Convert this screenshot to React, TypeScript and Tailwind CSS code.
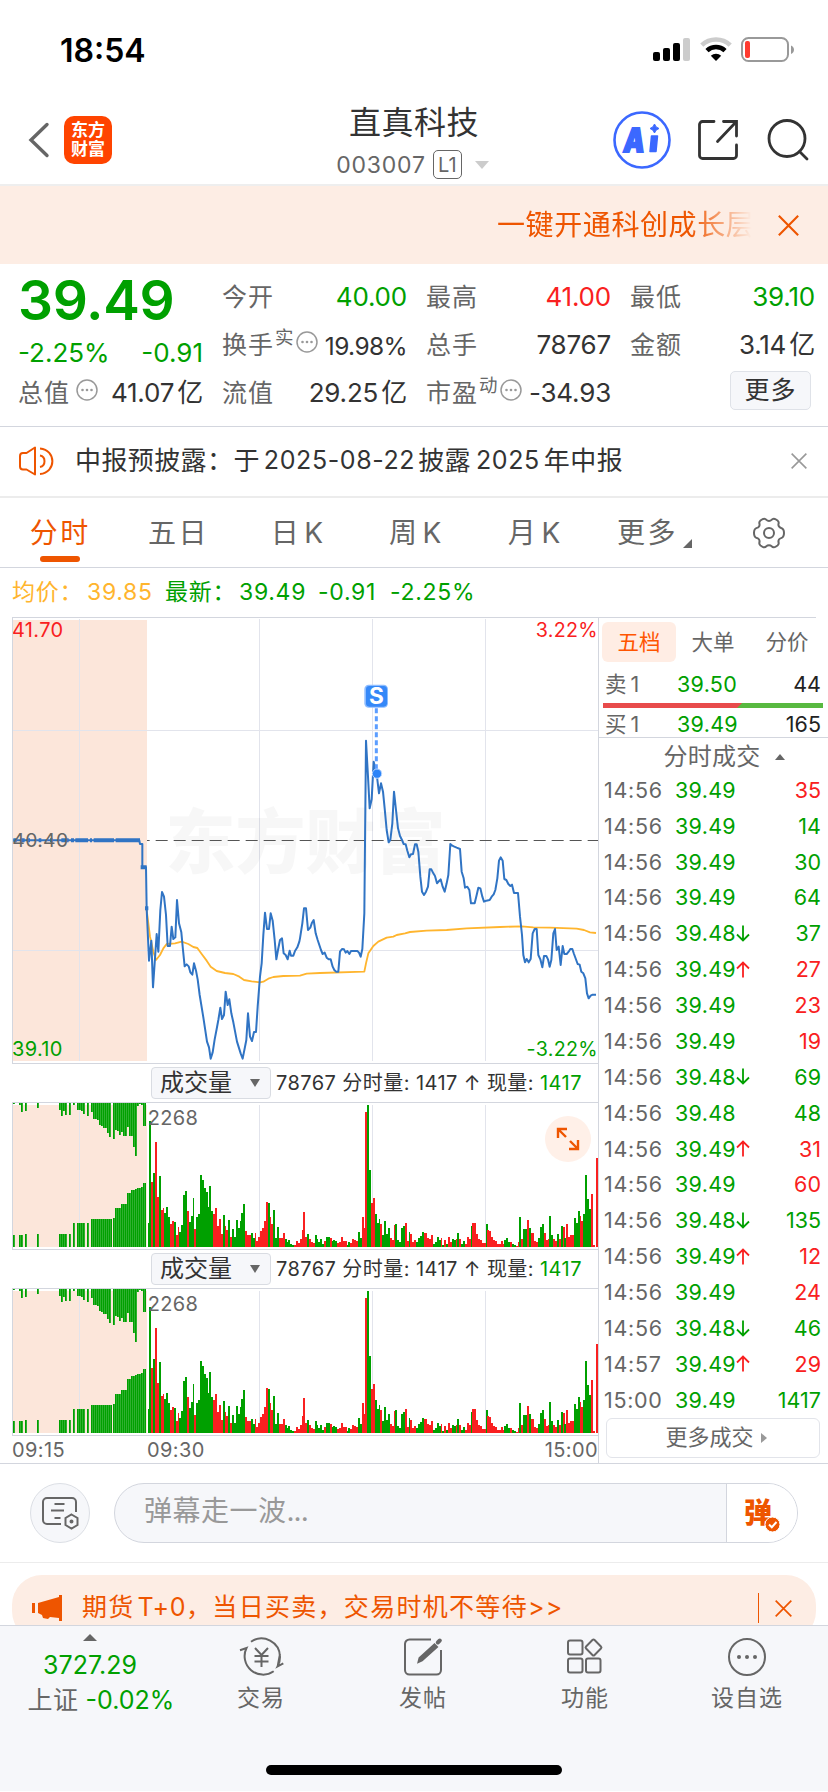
import type { ReactNode } from 'react'

// signed bar heights per minute: positive = red, negative = green
const VOLUME = [
  -72, -378, 196, -223, 316, 151, -213, 111, 117, -102, -121, -89, 68, 77, -75, 36, 61, -45, -66, -156,
  -169, 108, -75, -94, -147, 55, -91, -99, -215, -201, -176, -164, -119, -182, -107, 100, 118, 63, 85, 38,
  -96, 63, 51, -80, 30, -55, -30, -80, -56, -77, -101, -129, 49, 35, 37, -41, -26, 43, 17, 30,
  47, 56, 78, 136, -132, 91, 69, -112, -26, -61, 26, 28, 43, -23, -16, -22, -9, -6, 7, 18,
  11, 23, 51, 104, 31, -39, 23, 16, 13, -36, -24, -14, -25, -9, 17, -30, -29, 26, -17, -22,
  -19, 12, 14, 31, 18, 17, -7, -16, 13, 25, 22, 18, -45, -28, 91, 56, 405, -426, -230, 133,
  146, -99, -73, -84, 69, -36, -78, -39, -58, 26, 21, 67, -70, -21, -16, -57, -64, 73, 19, -45,
  39, 14, 21, -14, -27, -34, -45, 43, 43, 26, 24, 35, -8, -16, -31, -22, 26, -7, 20, -8,
  29, 14, -23, -20, 24, -42, 24, -9, -19, 8, 29, 23, -63, 72, 73, 39, 23, 22, 11, 12,
  -69, 51, 48, 30, 21, 19, 8, 8, 17, 9, -21, -26, -16, 15, -8, -7, 4, 15, -89, 23,
  -53, -55, 80, -56, 42, 42, 18, 16, -28, -61, -68, 42, 21, 24, -92, -36, 24, 17, -38, 23,
  -64, 59, -26, 68, 31, 35, 35, -86, -73, -107, 94, 79, -99, -215, -143, -113, 159, 5, 0, 266,
]

// call auction bars: [from, to, height]
const AUCTION_BOTTOM = [
  [39, 45, 36], [57, 69, 36], [75, 81, 39], [111, 117, 40], [177, 201, 40], [207, 213, 40], [219, 225, 72],
  [231, 256, 73], [262, 268, 73], [274, 329, 83], [329, 335, 85], [340, 346, 86], [346, 364, 116],
  [364, 382, 128], [382, 393, 162], [393, 405, 172], [405, 412, 175], [412, 424, 177], [424, 430, 181], [430, 437, 193],
]
const AUCTION_TOP = [
  [39, 45, 3], [57, 63, 6], [63, 69, 26], [75, 81, 25], [111, 117, 15], [177, 183, 21], [183, 189, 38], [189, 195, 25],
  [195, 201, 36], [207, 213, 36], [219, 225, 6], [231, 243, 22], [243, 249, 25], [249, 256, 32], [262, 268, 38],
  [274, 280, 28], [280, 292, 48], [292, 298, 51], [298, 304, 65], [304, 310, 69], [310, 322, 76], [322, 328, 91],
  [328, 334, 103], [340, 346, 109], [346, 352, 81], [352, 358, 84], [358, 364, 97], [364, 370, 88], [370, 382, 99],
  [382, 388, 73], [388, 400, 99], [400, 406, 133], [406, 412, 158], [412, 418, 8], [418, 424, 2], [424, 430, 7], [430, 437, 68],
]

const PRICE =
  '40,751 418,751 420,762 427,762 427,832 438,832 440,955 447,1112 454,1052 459,1192 470,1032 475,1085 481,960 486,906 492,920 498,975 503,1068 510,1068 515,1010 520,1047 526,1042 531,930 537,1000 544,1027 549,1080 554,1129 560,1123 566,1129 571,1147 577,1154 582,1120 588,1142 593,1168 599,1215 610,1282 621,1355 627,1372 632,1406 638,1387 644,1348 650,1317 655,1290 661,1253 666,1287 672,1275 677,1205 683,1245 688,1228 694,1270 700,1297 711,1355 722,1390 728,1406 739,1350 744,1270 750,1340 756,1353 762,1326 768,1326 773,1250 780,1160 785,1120 790,1035 795,968 801,1017 807,1017 812,970 818,992 824,1050 829,1108 834,1080 840,1050 846,1045 851,1090 857,1095 863,1108 869,1082 873,1097 880,1097 885,1083 892,1072 898,1055 ' +
  '900,1045 907,1000 912,955 918,955 924,1020 931,1013 936,998 941,990 947,1030 953,1050 963,1080 968,1092 974,1088 980,1103 986,1108 992,1108 998,1130 1003,1140 1008,1145 1015,1145 1020,1085 1026,1077 1032,1078 1037,1088 1042,1083 1048,1092 1053,1083 1072,1083 1077,1088 1082,1100 1087,1077 1093,970 1098,452 1104,560 1109,655 1115,628 1121,515 1130,552 1137,610 1143,580 1149,605 1154,655 1160,720 1166,757 1171,750 1177,700 1182,605 1188,660 1194,715 1200,738 1206,750 1211,762 1217,763 1222,782 1228,802 1233,793 1239,792 1245,763 1250,763 1255,785 1261,860 1266,905 1272,915 1278,905 1284,890 1289,838 1294,838 1300,850 1305,858 1311,880 1317,873 1322,868 1328,890 1334,905 1340,880 1345,855 ' +
  '1351,762 1357,767 1363,770 1370,773 1380,777 1385,845 1391,865 1395,893 1402,890 1408,900 1413,940 1424,940 1430,915 1435,893 1441,895 1447,920 1452,935 1459,932 1469,930 1475,920 1481,913 1486,900 1492,865 1497,812 1502,802 1508,812 1513,867 1519,870 1525,882 1531,888 1536,884 1542,909 1554,909 1560,980 1566,1035 1570,1095 1575,1117 1580,1107 1586,1117 1592,1107 1598,1030 1604,1017 1610,1017 1615,1095 1621,1108 1627,1132 1632,1098 1639,1098 1644,1108 1649,1130 1654,1110 1660,1030 1665,1017 1670,1080 1676,1070 1682,1125 1688,1068 1693,1092 1700,1092 1706,1085 1711,1077 1717,1077 1722,1092 1733,1122 1739,1124 1744,1145 1750,1150 1756,1165 1761,1210 1766,1225 1772,1217 1778,1214 1788,1214'

const AVERAGE =
  '440,960 450,1040 460,1085 468,1110 480,1095 490,1075 500,1062 525,1060 545,1055 565,1062 580,1071 592,1074 605,1092 620,1112 632,1130 650,1143 675,1149 700,1152 718,1160 732,1170 755,1174 780,1177 790,1175 805,1166 820,1161 850,1158 900,1157 920,1151 960,1149 1093,1145 1098,1120 1105,1090 1120,1068 1135,1055 1160,1043 1180,1040 1190,1035 1215,1030 1230,1026 1280,1022 1340,1020 1400,1015 1500,1011 1565,1009 1600,1012 1650,1013 1730,1016 1752,1020 1770,1027 1788,1029'

const TRADES: [string, string, string, string, boolean][] = [
  ['14:56', '39.49', '', '35', true],
  ['14:56', '39.49', '', '14', false],
  ['14:56', '39.49', '', '30', false],
  ['14:56', '39.49', '', '64', false],
  ['14:56', '39.48', 'down', '37', false],
  ['14:56', '39.49', 'up', '27', true],
  ['14:56', '39.49', '', '23', true],
  ['14:56', '39.49', '', '19', true],
  ['14:56', '39.48', 'down', '69', false],
  ['14:56', '39.48', '', '48', false],
  ['14:56', '39.49', 'up', '31', true],
  ['14:56', '39.49', '', '60', true],
  ['14:56', '39.48', 'down', '135', false],
  ['14:56', '39.49', 'up', '12', true],
  ['14:56', '39.49', '', '24', true],
  ['14:56', '39.48', 'down', '46', false],
  ['14:57', '39.49', 'up', '29', true],
  ['15:00', '39.49', '', '1417', false],
]

const GRID_X = [238.5, 778.5, 1117.5, 1456.5]

function StatusBar() {
  return (
    <div className="flex h-[92px] items-start justify-between pl-[60px] pr-[33px]">
      <span className="mt-[31px] text-[32px] leading-[40px] font-semibold text-black">18:54</span>
      <div className="mt-[37px] flex items-start">
        <svg width="37" height="24" viewBox="0 0 37 24">
          <rect x="0" y="15" width="7" height="9" rx="2" />
          <rect x="10" y="11" width="7" height="13" rx="2" />
          <rect x="20" y="6" width="7" height="18" rx="2" />
          <rect x="30" y="1" width="7" height="23" rx="2" fill="#cccccc" />
        </svg>
        <svg className="ml-[10px]" width="32" height="24" viewBox="0 0 32 24" fill="none">
          <path d="M1.800 8.200a20.500 20.500 0 0 1 28.400 0" stroke="#cccccc" strokeWidth="4.600" />
          <path d="M7 13.600a13.200 13.200 0 0 1 18 0" stroke="#000" strokeWidth="4.600" />
          <path d="M16 24l-5.200-5.300a7.600 7.600 0 0 1 10.400 0z" fill="#000" />
        </svg>
        <svg className="ml-[9px]" width="54" height="26" viewBox="0 0 54 26">
          <rect x="1" y="1" width="46" height="23" rx="6.5" fill="none" stroke="#999" strokeWidth="2" />
          <rect x="4" y="4" width="5" height="17" rx="2" fill="#ff3b30" />
          <path d="M50 8.500c4 1.500 4 7 0 8.500z" fill="#999" />
        </svg>
      </div>
    </div>
  )
}

function Header() {
  return (
    <div className="grid h-[94px] grid-cols-[1fr_auto_1fr] border-b-2 border-[#eeeeee]">
      <div className="flex items-start pl-[28px] pt-6">
        <svg className="mt-[6px]" width="22" height="36" viewBox="0 0 22 36" fill="none">
          <path d="M19 2.500L3 18l16 15.500" stroke="#666" strokeWidth="3.400" strokeLinecap="round" />
        </svg>
        <div className="ml-[14px] flex h-12 w-12 flex-col items-center justify-center rounded-[10px] bg-[#ff4400] text-[17px] leading-[19px] font-bold text-white">
          <span>东方</span>
          <span>财富</span>
        </div>
      </div>
      <div className="flex flex-col items-center">
        <h1 className="mt-[11px] text-[32px] leading-[40px] tracking-[0.500px] text-[#333]">直真科技</h1>
        <div className="mt-[7px] flex h-[29px] items-center pr-[3px]">
          <span className="pt-px text-[23px] tracking-[0.800px] text-[#666]">003007</span>
          <span className="ml-[7px] flex h-[29px] w-[29px] items-center justify-center rounded-[5px] border border-[#666] text-[20px] text-[#666]">
            L1
          </span>
          <span className="ml-[13px] h-0 w-0 border-x-[7px] border-t-[8px] border-x-transparent border-t-[#cccccc]" />
        </div>
      </div>
      <div className="flex items-start justify-end pr-[18px] pt-[19px]">
        <svg width="58" height="58" viewBox="0 0 58 58">
          <circle cx="29" cy="29" r="27.500" fill="none" stroke="#3b68ff" strokeWidth="2.600" />
          <text x="10" y="41" fontSize="33" fontWeight="900" fill="#3b68ff" stroke="#3b68ff" strokeWidth="1.800" transform="skewX(-7) translate(4.500 0)" textLength="21" lengthAdjust="spacingAndGlyphs">
            A
          </text>
          <path d="M38.500 25h6l-1.500 15.500h-6z" fill="#3b68ff" stroke="#3b68ff" strokeWidth="1.500" strokeLinejoin="round" />
          <path d="M41.500 13q1 3.500 4.500 4.500q-3.500 1-4.500 4.500q-1-3.500-4.500-4.500q3.500-1 4.500-4.500z" fill="#3b68ff" stroke="#3b68ff" />
        </svg>
        <svg className="ml-[26px] mt-[7px]" width="42" height="44" viewBox="0 0 42 44" fill="none" stroke="#333" strokeWidth="2.800">
          <path d="M17 3.500H5.500a3 3 0 0 0-3 3V37.500a3 3 0 0 0 3 3h31a3 3 0 0 0 3-3V27" strokeLinecap="round" />
          <path d="M26.500 3.500h13V18" strokeLinecap="round" />
          <path d="M38.500 4.500L20.500 23.500" strokeLinecap="round" />
        </svg>
        <svg className="ml-[27px] mt-[8px]" width="44" height="44" viewBox="0 0 44 44" fill="none" stroke="#333" strokeWidth="2.800">
          <circle cx="21" cy="19.500" r="18" />
          <path d="M33.500 32.500l7.500 7.500" strokeLinecap="round" />
        </svg>
      </div>
    </div>
  )
}

function Cross({ size, className }: { size: number; className: string }) {
  return (
    <svg className={className} width={size} height={size} viewBox="0 0 20 20" fill="none" stroke="currentColor" strokeWidth="2">
      <path d="M0.800 0.800L19.200 19.200M19.200 0.800L0.800 19.200" />
    </svg>
  )
}

function Banner() {
  return (
    <div className="flex h-[78px] items-center justify-end bg-[#fdede4] pr-[29px] text-[#ee5500]">
      <div className="w-[260px] text-[28px] leading-[40px] tracking-[0.600px] whitespace-nowrap [mask-image:linear-gradient(to_right,black_74%,transparent_98%)]">
        一键开通科创成长层
      </div>
      <Cross size={21} className="ml-[21px]" />
    </div>
  )
}

function Dots() {
  return (
    <svg width="22" height="22" viewBox="0 0 22 22" className="mb-[9px] shrink-0">
      <circle cx="11" cy="11" r="10" fill="none" stroke="#999" strokeWidth="1.500" />
      <circle cx="6.500" cy="11" r="1.300" fill="#999" />
      <circle cx="11" cy="11" r="1.300" fill="#999" />
      <circle cx="15.500" cy="11" r="1.300" fill="#999" />
    </svg>
  )
}

function Stat({ label, sup, dots, value, color = 'text-[#333]' }: { label: string; sup?: string; dots?: boolean; value: string; color?: string }) {
  const unit = value.endsWith('亿')
  return (
    <div className="flex h-12 items-center justify-between whitespace-nowrap">
      <div className="flex items-center text-[25px] tracking-[1px] text-[#666]">
        {label}
        {sup && <span className="mb-[16px] ml-px text-[18.500px] tracking-normal">{sup}</span>}
        {dots && <span className={sup ? 'ml-[2px]' : 'ml-[6px]'}><Dots /></span>}
      </div>
      <div className={`${sup === '实' ? 'pt-px text-[24.500px] tracking-[-0.600px]' : 'pb-[3px] text-[26px] tracking-[-0.200px]'} ${color}`}>
        {unit ? value.slice(0, -1) : value}
        {unit && <span className="ml-[3px]">亿</span>}
      </div>
    </div>
  )
}

function Quote() {
  return (
    <div className="flex h-[163px] border-b border-[#d3d6de] pt-[10px] pl-[18px]">
      <div className="w-[185px] shrink-0">
        <div className="-mt-[4px] h-[59px] text-[55px] leading-[60px] font-semibold tracking-[-0.300px] text-[#00a000]">39.49</div>
        <div className="flex h-[46px] items-center justify-between text-[26px] text-[#00a000]">
          <span>-2.25%</span>
          <span>-0.91</span>
        </div>
        <div className="-mt-[5px]">
          <Stat label="总值" dots value="41.07亿" />
        </div>
      </div>
      <div className="ml-[19px] w-[185px] shrink-0">
        <Stat label="今开" value="40.00" color="text-[#00a000]" />
        <Stat label="换手" sup="实" dots value="19.98%" />
        <Stat label="流值" value="29.25亿" />
      </div>
      <div className="ml-[19px] w-[185px] shrink-0">
        <Stat label="最高" value="41.00" color="text-[#f92020]" />
        <Stat label="总手" value="78767" />
        <Stat label="市盈" sup="动" dots value="-34.93" />
      </div>
      <div className="ml-[19px] w-[185px] shrink-0">
        <Stat label="最低" value="39.10" color="text-[#00a000]" />
        <Stat label="金额" value="3.14亿" />
        <div className="flex justify-end pt-px pr-[4px]">
          <button className="flex h-[39px] w-[81px] items-center justify-center rounded-[5px] border border-[#dfe2e8] bg-[#f6f7fa] text-[25px] tracking-[1px] text-[#333]">
            更多
          </button>
        </div>
      </div>
    </div>
  )
}

function Notice() {
  return (
    <div className="flex h-[71px] items-center border-b-2 border-[#ececec] pr-[21px] pb-[2px] pl-[19px]">
      <svg width="36" height="30" viewBox="0 0 36 30" fill="none" stroke="#ee5500" strokeWidth="2">
        <path d="M16 1.500v27l-8.500-5H4a3 3 0 0 1-3-3V10a3 3 0 0 1 3-3h3.500z" strokeLinejoin="round" />
        <path d="M21 9.500c6 1 6 10.500 0 11.500M21 2.500c16.500 1.500 16.500 24 0 25.500" />
      </svg>
      <div className="ml-[20px] flex items-center text-[26px] tracking-[0.400px] whitespace-nowrap text-[#333]">
        <span>中报预披露：于</span>
        <span className="mr-[3px] ml-[4px] text-[25px] tracking-[0.600px]">2025-08-22</span>
        <span>披露</span>
        <span className="mr-[4px] ml-[5px] text-[25px] tracking-[0.600px]">2025</span>
        <span>年中报</span>
      </div>
      <Cross size={16} className="ml-auto text-[#999]" />
    </div>
  )
}

function Tab({ children, className = '' }: { children: ReactNode; className?: string }) {
  return <div className={`flex items-center justify-center ${className}`}>{children}</div>
}

function ChartTabs() {
  return (
    <div className="grid h-[70px] grid-cols-7 border-b border-[#d3d6de] text-[28px] tracking-[2.500px] text-[#666]">
      <div className="relative flex items-center justify-center pl-[2px] text-[#ee5500]">
        分时
        <span className="absolute bottom-[5px] h-[6px] w-10 rounded-full bg-[#ee5500]" />
      </div>
      <Tab className="pl-[2px]">五日</Tab>
      <Tab className="pl-[5px]">日<span className="ml-[3px]">K</span></Tab>
      <Tab className="pl-[5px]">周<span className="ml-[3px]">K</span></Tab>
      <Tab className="pl-[6px]">月<span className="ml-[3px]">K</span></Tab>
      <Tab className="pl-[8px]">
        更多
        <svg className="ml-[5px] mt-[22px]" width="9" height="9"><path d="M9 0v9H0z" fill="#666" /></svg>
      </Tab>
      <Tab>
        <svg width="34" height="32" viewBox="0 0 34 32" fill="none" stroke="#666" strokeWidth="2">
          <path d="M10 2.500c1.500-1 3.500-.8 4.500.4c1.200 1.300 3.800 1.300 5 0c1-1.200 3-1.400 4.500-.4l1.500 1c1 .8 1.500 2 1 3.400c-.4 1.800.8 3.600 2.600 4c1.700.4 2.900 1.700 2.900 5.100s-1.200 4.700-2.900 5.100c-1.800.4-3 2.200-2.600 4c.5 1.400 0 2.600-1 3.400l-1.500 1c-1.500 1-3.500.8-4.500-.4c-1.200-1.300-3.800-1.300-5 0c-1 1.200-3 1.400-4.500.4l-1.500-1c-1-.8-1.500-2-1-3.400c.4-1.800-.8-3.600-2.600-4c-1.700-.4-2.900-1.700-2.900-5.100s1.200-4.700 2.900-5.100c1.800-.4 3-2.200 2.600-4c-.5-1.400 0-2.600 1-3.400z" />
          <circle cx="17" cy="16" r="5" />
        </svg>
      </Tab>
    </div>
  )
}

function Legend() {
  return (
    <div className="flex h-[49px] items-center pl-[12px] text-[23px] tracking-[0.700px] whitespace-nowrap text-[#00a000]">
      <span className="w-[75px] text-[#ffb52e]">均价：</span>
      <span className="w-[78px] text-[#ffb52e]">39.85</span>
      <span className="w-[74px]">最新：</span>
      <span className="w-[79px]">39.49</span>
      <span className="w-[72px]">-0.91</span>
      <span>-2.25%</span>
    </div>
  )
}

// chart drawings use three units per css pixel
function PriceChart() {
  return (
    <svg className="block" width="587" height="447" viewBox="36 81 1761 1341">
      <rect x="39" y="90" width="402" height="1323" fill="#fce6da" />
      <g stroke="#e2e4ec" strokeWidth="3">
        {GRID_X.map((x) => (
          <path key={x} d={`M${x} 87V1413`} />
        ))}
        <path d="M39 421.500H1794M39 1081.500H1794" />
      </g>
      <text x="496" y="833" fontSize="211" fontWeight="900" letterSpacing="-1" fill="#000" fillOpacity="0.030">
        东方财富
      </text>
      <path d="M441 751.500H1794" stroke="#555" strokeWidth="3" strokeDasharray="36 18" strokeDashoffset="28" />
      <g fontSize="60" letterSpacing="1">
        <text x="36" y="141" fill="#f92020">41.70</text>
        <text x="36" y="1399" fill="#00a000">39.10</text>
        <text x="1794" y="141" textAnchor="end" fontSize="59" fill="#f92020">3.22%</text>
        <text x="1794" y="1399" textAnchor="end" fontSize="59" fill="#00a000">-3.22%</text>
      </g>
      <g fill="none" strokeLinejoin="round">
        <polyline points={AVERAGE} stroke="#ffb52e" strokeWidth="5.500" />
        <polyline points={PRICE} stroke="#3074c4" strokeWidth="6" />
        <path d="M40 751H50M62 751H74M82 751H90M116 751H124M150 751H158M184 751H206M213 751H222M226 751H264M270 751H276M281 751H342M347 751H420M422 832H440M435 955H445" stroke="#3074c4" strokeWidth="12" />
      </g>
      <text x="37" y="771" fontSize="58" letterSpacing="1" fill="#666">40.40</text>
      <path d="M1129 355V540" stroke="#5b9dff" strokeWidth="9" strokeDasharray="15 9" />
      <rect x="1093" y="284" width="71" height="69" rx="13" fill="#8dbcff" />
      <rect x="1098" y="288" width="63" height="62" rx="10" fill="#3588f8" />
      <text x="1129.500" y="343" textAnchor="middle" fontSize="68" fontWeight="700" fill="#fff">S</text>
      <circle cx="1131" cy="551" r="14" fill="#2b84f8" stroke="#b8d6ff" strokeWidth="3" />
      <path d="M36 82.500H1797M36 1420.500H1797M37.500 81V1422" stroke="#d3d6de" strokeWidth="3" />
    </svg>
  )
}

function VolumeChart() {
  return (
    <svg className="block" width="587" height="148" viewBox="36 156 1761 444">
      <defs>
        <pattern id="auction" x="39" y="0" width="6" height="6" patternUnits="userSpaceOnUse">
          <rect width="6" height="6" fill="#00a000" />
          <rect x="3" width="3" height="6" fill="#2fb02f" />
        </pattern>
      </defs>
      <rect x="39" y="165" width="402" height="426" fill="#fce6da" />
      <g stroke="#e2e4ec" strokeWidth="3">
        {GRID_X.map((x) => (
          <path key={x} d={`M${x} 165V591`} />
        ))}
      </g>
      <g fill="url(#auction)" shapeRendering="crispEdges">
        {AUCTION_BOTTOM.map(([a, b, h]) => (
          <rect key={a} x={a} y={591 - h} width={b - a} height={h} />
        ))}
        {AUCTION_TOP.map(([a, b, h]) => (
          <rect key={a} x={a} y={159} width={b - a} height={h} />
        ))}
      </g>
      <g shapeRendering="crispEdges">
        {VOLUME.map((v, i) => (
          <rect
            key={i}
            x={442.5 + i * 5.635}
            y={591 - Math.abs(v)}
            width={5.7}
            height={Math.abs(v)}
            fill={v > 0 ? '#f92020' : '#00a000'}
          />
        ))}
      </g>
      <text x="443" y="225" fontSize="60" letterSpacing="1" fill="#666">2268</text>
      <path d="M36 157.500H1797M36 598.500H1797M37.500 156V600" stroke="#d3d6de" strokeWidth="3" />
    </svg>
  )
}

function VolumeHeader() {
  return (
    <div className="flex h-[38px] items-center pl-[139px] text-[20px] whitespace-nowrap text-[#333]">
      <div className="flex h-8 w-[120px] items-center rounded-[4px] border border-[#d9dce2] bg-[#f6f7fa] pl-[8px] text-[24px]">
        成交量
        <span className="ml-[18px] h-0 w-0 border-x-[5px] border-t-[8px] border-x-transparent border-t-[#666]" />
      </div>
      <span className="ml-[5px] tracking-[0.430px]">
        78767 分时量: 1417 ↑ 现量: <span className="text-[#00a000]">1417</span>
      </span>
    </div>
  )
}

function Charts() {
  return (
    <div className="w-[599px] border-r border-[#d3d6de] pl-3">
      <PriceChart />
      <VolumeHeader />
      <div className="relative">
        <VolumeChart />
        <div className="absolute top-[14px] left-[533px] flex h-[46px] w-[46px] items-center justify-center rounded-full bg-[#fff0e8]">
          <svg width="24" height="24" viewBox="0 0 24 24" fill="none" stroke="#ee5500" strokeWidth="2.400">
            <path d="M11 2H2v9M2 2l8 8M13 22h9v-9M22 22l-8-8" />
          </svg>
        </div>
      </div>
      <VolumeHeader />
      <VolumeChart />
      <div className="flex h-[27px] items-center text-[20px] tracking-[0.400px] text-[#666]">
        <span className="w-[135px]">09:15</span>
        <span>09:30</span>
        <span className="ml-auto">15:00</span>
      </div>
    </div>
  )
}

function Arrow({ up }: { up: boolean }) {
  return (
    <svg className={up ? 'text-[#f92020]' : 'rotate-180 text-[#00a000]'} width="14" height="17" viewBox="0 0 14 17" fill="none" stroke="currentColor" strokeWidth="1.800">
      <path d="M7 16.500V1.500M1 7.500l6-6l6 6" />
    </svg>
  )
}

function OrderPanel() {
  return (
    <div className="flex-1">
      <div className="mr-3 h-px bg-[#d3d6de]" />
      <div className="mt-[4px] flex h-10 pl-[3px] text-[21.500px] text-[#666]">
        <span className="flex w-[74px] items-center justify-center rounded-[6px] bg-[#ffede4] text-[#ff5500]">五档</span>
        <span className="flex w-[74px] items-center justify-center">大单</span>
        <span className="flex w-[74px] items-center justify-center">分价</span>
      </div>
      <div className="flex h-[41px] items-center pt-[3px] pr-[7px] pl-[6px] text-[21.500px]">
        <span className="w-[72px] text-[#666]">卖<span className="ml-[4px]">1</span></span>
        <span className="tracking-[0.300px] text-[#00a000]">39.50</span>
        <span className="ml-auto text-[#222]">44</span>
      </div>
      <svg className="ml-[4px] block" width="220" height="5">
        <rect width="220" height="5" fill="#58b940" />
        <path d="M0 0h139l-5 5H0z" fill="#e84b4b" />
      </svg>
      <div className="flex h-[30px] items-center border-b border-[#d3d6de] pt-[3px] pr-[7px] pl-[6px] text-[21.500px]">
        <span className="w-[72px] text-[#666]">买<span className="ml-[4px]">1</span></span>
        <span className="tracking-[0.300px] text-[#00a000]">39.49</span>
        <span className="ml-auto text-[#222]">165</span>
      </div>
      <div className="flex h-[34px] items-center justify-center pt-[4px] pl-[21px] text-[24px] tracking-[0.300px] text-[#666]">
        分时成交
        <span className="ml-[14px] h-0 w-0 border-x-[5px] border-b-[6px] border-x-transparent border-b-[#666]" />
      </div>
      {TRADES.map(([time, price, arrow, qty, red], i) => (
        <div key={i} className="flex h-[35.880px] items-center pr-[7px] pl-[5px] text-[21.500px]">
          <span className="w-[71px] tracking-[0.700px] text-[#666]">{time}</span>
          <span className="tracking-[0.300px] text-[#00a000]">{price}</span>
          {arrow && <Arrow up={arrow === 'up'} />}
          <span className={red ? 'ml-auto text-[#f92020]' : 'ml-auto text-[#00a000]'}>{qty}</span>
        </div>
      ))}
      <div className="mr-[8px] ml-[7px] flex h-10 items-center justify-center rounded-[6px] border border-[#e2e4ea] pl-[6px] text-[22px] text-[#666]">
        更多成交
        <span className="ml-[7px] h-0 w-0 border-y-[5px] border-l-[6px] border-y-transparent border-l-[#999]" />
      </div>
    </div>
  )
}

function CommentBar() {
  return (
    <div className="flex h-[100px] items-center border-y border-t-[#d3d6de] border-b-[#ececec] pr-[30px] pl-[30px]">
      <div className="flex h-[60px] w-[60px] items-center justify-center rounded-full border border-[#dcdfe5] bg-[#f6f7fa]">
        <svg width="38" height="34" viewBox="0 0 38 34" fill="none" stroke="#666" strokeWidth="2">
          <path d="M35 16V6a4 4 0 0 0-4-4H6a4 4 0 0 0-4 4v18a4 4 0 0 0 4 4h14" />
          <path d="M13.500 8h10M10 14.500h13M13.500 22h6" />
          <path d="M30.500 18.500l6 3.500v7l-6 3.500l-6-3.500v-7z" />
          <circle cx="30.500" cy="25.500" r="1" fill="#666" />
        </svg>
      </div>
      <div className="ml-[24px] flex h-[60px] flex-1 overflow-hidden rounded-full border border-[#d3d6de] bg-[#f6f7fa]">
        <span className="flex-1 pl-[29px] text-[28px] leading-[54px] tracking-[0.500px] text-[#999]">
          弹幕走一波<span className="tracking-[-1px]">...</span>
        </span>
        <div className="flex w-[71px] items-center border-l border-[#d3d6de] bg-white pl-[17px]">
          <div className="relative text-[28px] leading-none font-black text-[#ee5500]">
            弹
            <svg className="absolute top-[17px] left-[20px]" width="17" height="17" viewBox="0 0 17 17">
              <circle cx="8.500" cy="8.500" r="7.500" fill="#ee5500" stroke="#fff" />
              <path d="M5 8.500l2.800 2.700l4.700-5.200" fill="none" stroke="#fff" strokeWidth="2" />
            </svg>
          </div>
        </div>
      </div>
    </div>
  )
}

function Promo() {
  return (
    <div className="h-[62px] overflow-hidden px-3 pt-3">
      <div className="flex h-[66px] items-center rounded-[30px] bg-[#fdede4] pl-[20px] text-[#ee5500]">
        <svg width="30" height="26" viewBox="0 0 30 26" fill="#ee5500">
          <path d="M0 8h3v10H0zM6 8l21-6V0h3v26h-3v-3l-9-1l-2 2l-5-1l-1-3l-4-2z" />
        </svg>
        <span className="ml-[20px] text-[25px] tracking-[1.300px] whitespace-nowrap">
          期货<span className="ml-[3px] tracking-[0.600px]">T+0</span>，当日买卖，交易时机不等待&gt;&gt;
        </span>
        <span className="ml-auto h-[30px] w-px bg-[#ee5500]" />
        <Cross size={17} className="mr-[24px] ml-[16px]" />
      </div>
    </div>
  )
}

function NavItem({ label, children }: { label: string; children: ReactNode }) {
  return (
    <div className="flex flex-1 flex-col items-center pt-[10px] text-[23px] text-[#666]">
      <svg className="overflow-visible" width="44" height="42" viewBox="0 0 44 42" fill="none" stroke="#666" strokeWidth="2">
        {children}
      </svg>
      <span className="mt-[3px] leading-[34px] tracking-[1px]">{label}</span>
    </div>
  )
}

function BottomNav() {
  return (
    <div className="h-[166px] border-t border-[#d3d6de] bg-[#f6f7fa]">
      <div className="flex h-[139px]">
        <div className="flex w-[180px] flex-col items-center pt-[8px] text-[25px] leading-[34px] text-[#00a000]">
          <span className="h-0 w-0 border-x-[7px] border-b-[7px] border-x-transparent border-b-[#666]" />
          <span className="mt-[7px]">3727.29</span>
          <span className="mt-[1px] pl-[22px] whitespace-nowrap">
            <span className="tracking-[0.500px] text-[#666]">上证</span>
            <span className="ml-[7px]">-0.02%</span>
          </span>
        </div>
        <NavItem label="交易">
          <path d="M12 5.700A18.500 18.500 0 0 1 41 21q0 5-2.300 9.300l5.600-3M38.700 30.300L41 18" />
          <path d="M34.700 35.300A18.500 18.500 0 0 1 7.500 12L1 14.300" />
          <path d="M16 12l6.500 7l6.500-7M22.500 19v12M15.500 20h14M15.500 25.500h14" />
        </NavItem>
        <NavItem label="发帖">
          <path d="M30 3.500H8.500A4.500 4.500 0 0 0 4 8v26a4.500 4.500 0 0 0 4.500 4.500h27A4.500 4.500 0 0 0 40 34V14" />
          <path d="M17.500 26l1-4L33.500 8.500l2.500 2.500L21 24.500z" fill="#666" />
          <path d="M36.800 6.500l2-2" strokeWidth="4" strokeLinecap="round" />
        </NavItem>
        <NavItem label="功能">
          <rect x="5" y="4.500" width="14.500" height="14" rx="2" />
          <rect x="5" y="22.500" width="14.500" height="14" rx="2" />
          <rect x="23" y="22.500" width="14.500" height="14" rx="2" />
          <rect x="-6" y="-6" width="12" height="12" rx="1.500" transform="translate(30.500 11.500) rotate(45)" />
        </NavItem>
        <NavItem label="设自选">
          <circle cx="22" cy="21" r="18" />
          <g fill="#666" stroke="none">
            <circle cx="14" cy="21" r="2" />
            <circle cx="22" cy="21" r="2" />
            <circle cx="30" cy="21" r="2" />
          </g>
        </NavItem>
      </div>
      <div className="mx-auto h-[10px] w-[296px] rounded-full bg-black" />
    </div>
  )
}

export default function App() {
  return (
    <div className="h-[1792px] w-[828px] overflow-hidden bg-white font-['Inter','Noto_Sans_CJK_SC',sans-serif]">
      <StatusBar />
      <Header />
      <Banner />
      <Quote />
      <Notice />
      <ChartTabs />
      <Legend />
      <div className="flex h-[846px]">
        <Charts />
        <OrderPanel />
      </div>
      <CommentBar />
      <Promo />
      <BottomNav />
    </div>
  )
}
